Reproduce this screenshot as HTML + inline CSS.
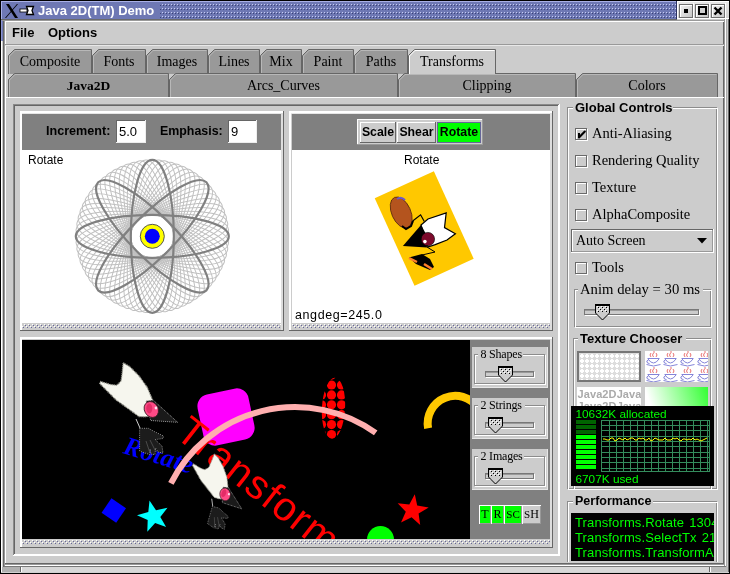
<!DOCTYPE html>
<html><head><meta charset="utf-8"><title>Java 2D(TM) Demo</title>
<style>html,body{margin:0;padding:0;width:730px;height:574px;overflow:hidden;background:#ccc}
svg{display:block;will-change:transform}</style></head>
<body><svg width="730" height="574" viewBox="0 0 730 574"><rect x="0" y="0" width="730" height="574" fill="#cccccc" />
<rect x="0" y="0" width="1" height="574" fill="#000" />
<rect x="729" y="0" width="1" height="574" fill="#000" />
<rect x="0" y="0" width="730" height="1" fill="#000" />
<rect x="0" y="573" width="730" height="1" fill="#000" />
<rect x="1" y="41" width="1" height="532" fill="#ffffff" />
<rect x="1" y="19" width="2" height="22" fill="#8c94d0" />
<rect x="2" y="19" width="1" height="22" fill="#6e78b4" />
<rect x="3" y="19" width="1" height="549" fill="#666666" />
<rect x="4" y="19" width="1" height="549" fill="#999999" />
<rect x="5" y="21" width="1" height="545" fill="#ffffff" />
<rect x="723" y="21" width="1" height="545" fill="#666666" />
<rect x="724" y="19" width="1" height="549" fill="#999999" />
<rect x="725" y="19" width="1" height="549" fill="#ffffff" />
<rect x="726" y="19" width="1" height="549" fill="#aaaaaa" />
<rect x="728" y="19" width="1" height="554" fill="#666666" />
<rect x="1" y="1" width="676" height="18" fill="#6e78b4" />
<rect x="1" y="1" width="676" height="1" fill="#a9b0e6" />
<rect x="1" y="1" width="1" height="18" fill="#a9b0e6" />
<rect x="676" y="1" width="1" height="18" fill="#4a5290" />
<defs><pattern id="tb" x="0" y="0" width="3" height="4" patternUnits="userSpaceOnUse"><rect x="0" y="0" width="1" height="1" fill="#c8ccf2"/><rect x="1" y="1" width="1" height="1" fill="#3c4478"/></pattern><pattern id="mb" x="0" y="0" width="4" height="4" patternUnits="userSpaceOnUse"><rect x="0" y="0" width="1" height="1" fill="#fff"/><rect x="2" y="2" width="1" height="1" fill="#fff"/><rect x="1" y="1" width="1" height="1" fill="#666699"/><rect x="3" y="3" width="1" height="1" fill="#666699"/></pattern><pattern id="thumb" x="0" y="0" width="4" height="4" patternUnits="userSpaceOnUse"><rect width="4" height="4" fill="#ccccff"/><rect x="0" y="0" width="1" height="1" fill="#fff"/><rect x="2" y="2" width="1" height="1" fill="#fff"/><rect x="1" y="1" width="1" height="1" fill="#666699"/><rect x="3" y="3" width="1" height="1" fill="#666699"/></pattern></defs>
<rect x="160" y="4" width="516" height="14" fill="url(#tb)" />
<rect x="1" y="19" width="676" height="1" fill="#6a6a6a" />
<defs><linearGradient id="bg1" x1="0" y1="0" x2="1" y2="1"><stop offset="0" stop-color="#f2f2f2"/><stop offset="1" stop-color="#c4c4c4"/></linearGradient><linearGradient id="bg2" x1="0" y1="0" x2="0" y2="1"><stop offset="0" stop-color="#e8e8e8"/><stop offset="1" stop-color="#cfcfcf"/></linearGradient></defs>
<rect x="677" y="1" width="52" height="18" fill="url(#bg2)" />
<rect x="677" y="1" width="52" height="1" fill="#ffffff" />
<rect x="677" y="1" width="1" height="18" fill="#ffffff" />
<rect x="677" y="18" width="52" height="1" fill="#ffffff" />
<rect x="676" y="1" width="1" height="18" fill="#2a3060" />
<rect x="679.5" y="4.5" width="13" height="13" fill="url(#bg1)" stroke="#707070"/>
<rect x="680" y="5" width="12" height="1" fill="#ffffff" />
<rect x="680" y="5" width="1" height="12" fill="#ffffff" />
<rect x="693" y="3" width="1" height="15" fill="#ffffff" />
<rect x="695.5" y="4.5" width="13" height="13" fill="url(#bg1)" stroke="#707070"/>
<rect x="696" y="5" width="12" height="1" fill="#ffffff" />
<rect x="696" y="5" width="1" height="12" fill="#ffffff" />
<rect x="709" y="3" width="1" height="15" fill="#ffffff" />
<rect x="711.5" y="4.5" width="13" height="13" fill="url(#bg1)" stroke="#707070"/>
<rect x="712" y="5" width="12" height="1" fill="#ffffff" />
<rect x="712" y="5" width="1" height="12" fill="#ffffff" />
<rect x="725" y="3" width="1" height="15" fill="#ffffff" />
<rect x="684" y="9" width="4" height="4" fill="#000" />
<rect x="699" y="7" width="7" height="7" fill="#cfcfcf" stroke="#000" stroke-width="2"/>
<path d="M714.5 7.5 L721.5 14.5 M721.5 7.5 L714.5 14.5" stroke="#000" stroke-width="2.4"/>
<path d="M6 4 L9 4 L18 18 L15 18 Z" fill="#000"/><path d="M17 4 L18 4 L6 18 L5 18 Z" fill="#000"/>
<rect x="20" y="9" width="7" height="3" fill="#fff" stroke="#000" stroke-width="0.8"/>
<path d="M26.5 6.5 L33.5 6.5 L32 10.5 L33.5 14.5 L26.5 14.5 L28 10.5 Z" fill="#fff" stroke="#000" stroke-width="1.3"/>
<text x="38" y="15" font-family="Liberation Sans" font-size="13" font-weight="bold" fill="#fff" text-anchor="start" >Java 2D(TM) Demo</text>
<rect x="2" y="20" width="722" height="1" fill="#9a9a9a" />
<rect x="5" y="21" width="719" height="1" fill="#ffffff" />
<text x="12" y="37" font-family="Liberation Sans" font-size="13" font-weight="bold" fill="#000" text-anchor="start" >File</text>
<text x="48" y="37" font-family="Liberation Sans" font-size="13" font-weight="bold" fill="#000" text-anchor="start" >Options</text>
<rect x="5" y="44" width="719" height="1" fill="#999999" />
<rect x="5" y="45" width="719" height="1" fill="#e8e8e8" />
<path d="M8.5 74 L8.5 55.5 L14.5 49.5 L91.5 49.5 L91.5 74" fill="#999999" stroke="#666666" stroke-width="1"/>
<path d="M9.5 74 L9.5 56 L15 50.5 L90.5 50.5" fill="none" stroke="#b8b8b8" stroke-width="1"/>
<text x="50.0" y="65.5" font-family="Liberation Serif" font-size="14" font-weight="normal" fill="#000" text-anchor="middle" >Composite</text>
<path d="M92.5 74 L92.5 55.5 L98.5 49.5 L145.5 49.5 L145.5 74" fill="#999999" stroke="#666666" stroke-width="1"/>
<path d="M93.5 74 L93.5 56 L99 50.5 L144.5 50.5" fill="none" stroke="#b8b8b8" stroke-width="1"/>
<text x="119.0" y="65.5" font-family="Liberation Serif" font-size="14" font-weight="normal" fill="#000" text-anchor="middle" >Fonts</text>
<path d="M146.5 74 L146.5 55.5 L152.5 49.5 L207.5 49.5 L207.5 74" fill="#999999" stroke="#666666" stroke-width="1"/>
<path d="M147.5 74 L147.5 56 L153 50.5 L206.5 50.5" fill="none" stroke="#b8b8b8" stroke-width="1"/>
<text x="177.0" y="65.5" font-family="Liberation Serif" font-size="14" font-weight="normal" fill="#000" text-anchor="middle" >Images</text>
<path d="M208.5 74 L208.5 55.5 L214.5 49.5 L259.5 49.5 L259.5 74" fill="#999999" stroke="#666666" stroke-width="1"/>
<path d="M209.5 74 L209.5 56 L215 50.5 L258.5 50.5" fill="none" stroke="#b8b8b8" stroke-width="1"/>
<text x="234.0" y="65.5" font-family="Liberation Serif" font-size="14" font-weight="normal" fill="#000" text-anchor="middle" >Lines</text>
<path d="M260.5 74 L260.5 55.5 L266.5 49.5 L301.5 49.5 L301.5 74" fill="#999999" stroke="#666666" stroke-width="1"/>
<path d="M261.5 74 L261.5 56 L267 50.5 L300.5 50.5" fill="none" stroke="#b8b8b8" stroke-width="1"/>
<text x="281.0" y="65.5" font-family="Liberation Serif" font-size="14" font-weight="normal" fill="#000" text-anchor="middle" >Mix</text>
<path d="M302.5 74 L302.5 55.5 L308.5 49.5 L353.5 49.5 L353.5 74" fill="#999999" stroke="#666666" stroke-width="1"/>
<path d="M303.5 74 L303.5 56 L309 50.5 L352.5 50.5" fill="none" stroke="#b8b8b8" stroke-width="1"/>
<text x="328.0" y="65.5" font-family="Liberation Serif" font-size="14" font-weight="normal" fill="#000" text-anchor="middle" >Paint</text>
<path d="M354.5 74 L354.5 55.5 L360.5 49.5 L407.5 49.5 L407.5 74" fill="#999999" stroke="#666666" stroke-width="1"/>
<path d="M355.5 74 L355.5 56 L361 50.5 L406.5 50.5" fill="none" stroke="#b8b8b8" stroke-width="1"/>
<text x="381.0" y="65.5" font-family="Liberation Serif" font-size="14" font-weight="normal" fill="#000" text-anchor="middle" >Paths</text>
<path d="M8.5 97 L8.5 79.5 L14.5 73.5 L168.5 73.5 L168.5 97" fill="#999999" stroke="#666666" stroke-width="1"/>
<path d="M9.5 97 L9.5 80 L15 74.5 L167.5 74.5" fill="none" stroke="#b8b8b8" stroke-width="1"/>
<text x="88.5" y="89.5" font-family="Liberation Serif" font-size="13.5" font-weight="bold" fill="#000" text-anchor="middle" >Java2D</text>
<path d="M169.5 97 L169.5 79.5 L175.5 73.5 L397.5 73.5 L397.5 97" fill="#999999" stroke="#666666" stroke-width="1"/>
<path d="M170.5 97 L170.5 80 L176 74.5 L396.5 74.5" fill="none" stroke="#b8b8b8" stroke-width="1"/>
<text x="283.5" y="89.5" font-family="Liberation Serif" font-size="14" font-weight="normal" fill="#000" text-anchor="middle" >Arcs_Curves</text>
<path d="M398.5 97 L398.5 79.5 L404.5 73.5 L575.5 73.5 L575.5 97" fill="#999999" stroke="#666666" stroke-width="1"/>
<path d="M399.5 97 L399.5 80 L405 74.5 L574.5 74.5" fill="none" stroke="#b8b8b8" stroke-width="1"/>
<text x="487.0" y="89.5" font-family="Liberation Serif" font-size="14" font-weight="normal" fill="#000" text-anchor="middle" >Clipping</text>
<path d="M576.5 97 L576.5 79.5 L582.5 73.5 L717.5 73.5 L717.5 97" fill="#999999" stroke="#666666" stroke-width="1"/>
<path d="M577.5 97 L577.5 80 L583 74.5 L716.5 74.5" fill="none" stroke="#b8b8b8" stroke-width="1"/>
<text x="647.0" y="89.5" font-family="Liberation Serif" font-size="14" font-weight="normal" fill="#000" text-anchor="middle" >Colors</text>
<path d="M408.5 74 L408.5 55.5 L414.5 49.5 L495.5 49.5 L495.5 74" fill="#cccccc" stroke="#666666" stroke-width="1"/>
<path d="M409.5 74 L409.5 56 L415 50.5 L494.5 50.5" fill="none" stroke="#fff" stroke-width="1"/>
<text x="452.0" y="65.5" font-family="Liberation Serif" font-size="14" font-weight="normal" fill="#000" text-anchor="middle" >Transforms</text>
<rect x="6" y="97" width="718" height="1" fill="#ffffff" />
<rect x="13" y="104" width="546" height="1" fill="#8a8a8a" />
<rect x="14" y="105" width="544" height="1" fill="#666666" />
<rect x="13" y="104" width="1" height="452" fill="#8a8a8a" />
<rect x="14" y="105" width="1" height="450" fill="#666666" />
<rect x="13" y="555" width="547" height="1" fill="#ffffff" />
<rect x="14" y="554" width="545" height="1" fill="#ffffff" />
<rect x="559" y="104" width="1" height="452" fill="#ffffff" />
<rect x="558" y="105" width="1" height="450" fill="#ffffff" />
<rect x="20" y="111" width="264" height="2" fill="#ffffff" />
<rect x="20" y="111" width="2" height="220" fill="#ffffff" />
<rect x="283" y="111" width="1" height="220" fill="#666666" />
<rect x="20" y="330" width="264" height="1" fill="#666666" />
<rect x="281" y="113" width="2" height="217" fill="#dddddd" />
<rect x="22" y="113" width="259" height="1" fill="#e6e6e6" />
<rect x="22" y="114" width="259" height="36" fill="#808080" />
<rect x="22" y="150" width="259" height="173" fill="#ffffff" />
<rect x="22" y="323" width="259" height="7" fill="#cccccc" />
<rect x="22" y="324" width="259" height="4" fill="url(#mb)" />
<rect x="289" y="111" width="264" height="2" fill="#ffffff" />
<rect x="289" y="111" width="2" height="220" fill="#ffffff" />
<rect x="552" y="111" width="1" height="220" fill="#666666" />
<rect x="289" y="330" width="264" height="1" fill="#666666" />
<rect x="550" y="113" width="2" height="217" fill="#dddddd" />
<rect x="291" y="113" width="259" height="1" fill="#e6e6e6" />
<rect x="292" y="114" width="258" height="36" fill="#808080" />
<rect x="292" y="150" width="258" height="173" fill="#ffffff" />
<rect x="292" y="323" width="258" height="7" fill="#cccccc" />
<rect x="292" y="324" width="258" height="4" fill="url(#mb)" />
<rect x="20" y="337" width="533" height="2" fill="#ffffff" />
<rect x="20" y="337" width="2" height="211" fill="#ffffff" />
<rect x="552" y="337" width="1" height="211" fill="#666666" />
<rect x="20" y="547" width="533" height="1" fill="#666666" />
<rect x="550" y="339" width="2" height="208" fill="#dddddd" />
<rect x="22" y="340" width="448" height="199" fill="#000" />
<rect x="470" y="340" width="80" height="199" fill="#808080" />
<rect x="22" y="539" width="528" height="8" fill="#cccccc" />
<rect x="22" y="540" width="528" height="4" fill="url(#mb)" />
<text x="46" y="135" font-family="Liberation Sans" font-size="12.6" font-weight="bold" fill="#000" text-anchor="start" >Increment:</text>
<rect x="116" y="120" width="30" height="23" fill="#ffffff" />
<rect x="116" y="120" width="30" height="1" fill="#666666" />
<rect x="116" y="120" width="1" height="23" fill="#666666" />
<rect x="116" y="142" width="30" height="1" fill="#eeeeee" />
<rect x="145" y="120" width="1" height="23" fill="#eeeeee" />
<text x="119" y="136" font-family="Liberation Sans" font-size="13" font-weight="normal" fill="#000" text-anchor="start" >5.0</text>
<text x="160" y="135" font-family="Liberation Sans" font-size="12.4" font-weight="bold" fill="#000" text-anchor="start" >Emphasis:</text>
<rect x="228" y="120" width="29" height="23" fill="#ffffff" />
<rect x="228" y="120" width="29" height="1" fill="#666666" />
<rect x="228" y="120" width="1" height="23" fill="#666666" />
<rect x="228" y="142" width="29" height="1" fill="#eeeeee" />
<rect x="256" y="120" width="1" height="23" fill="#eeeeee" />
<text x="231" y="136" font-family="Liberation Sans" font-size="13" font-weight="normal" fill="#000" text-anchor="start" >9</text>
<text x="28" y="164" font-family="Liberation Sans" font-size="12" font-weight="normal" fill="#000" text-anchor="start" >Rotate</text>
<g transform="translate(152.3 236.3)" fill="none">
<ellipse rx="21.5" ry="76.5" transform="rotate(5)" stroke="#c0c0c0" stroke-width="1"/>
<ellipse rx="21.5" ry="76.5" transform="rotate(10)" stroke="#c0c0c0" stroke-width="1"/>
<ellipse rx="21.5" ry="76.5" transform="rotate(15)" stroke="#c0c0c0" stroke-width="1"/>
<ellipse rx="21.5" ry="76.5" transform="rotate(20)" stroke="#c0c0c0" stroke-width="1"/>
<ellipse rx="21.5" ry="76.5" transform="rotate(25)" stroke="#c0c0c0" stroke-width="1"/>
<ellipse rx="21.5" ry="76.5" transform="rotate(30)" stroke="#c0c0c0" stroke-width="1"/>
<ellipse rx="21.5" ry="76.5" transform="rotate(35)" stroke="#c0c0c0" stroke-width="1"/>
<ellipse rx="21.5" ry="76.5" transform="rotate(40)" stroke="#c0c0c0" stroke-width="1"/>
<ellipse rx="21.5" ry="76.5" transform="rotate(50)" stroke="#c0c0c0" stroke-width="1"/>
<ellipse rx="21.5" ry="76.5" transform="rotate(55)" stroke="#c0c0c0" stroke-width="1"/>
<ellipse rx="21.5" ry="76.5" transform="rotate(60)" stroke="#c0c0c0" stroke-width="1"/>
<ellipse rx="21.5" ry="76.5" transform="rotate(65)" stroke="#c0c0c0" stroke-width="1"/>
<ellipse rx="21.5" ry="76.5" transform="rotate(70)" stroke="#c0c0c0" stroke-width="1"/>
<ellipse rx="21.5" ry="76.5" transform="rotate(75)" stroke="#c0c0c0" stroke-width="1"/>
<ellipse rx="21.5" ry="76.5" transform="rotate(80)" stroke="#c0c0c0" stroke-width="1"/>
<ellipse rx="21.5" ry="76.5" transform="rotate(85)" stroke="#c0c0c0" stroke-width="1"/>
<ellipse rx="21.5" ry="76.5" transform="rotate(95)" stroke="#c0c0c0" stroke-width="1"/>
<ellipse rx="21.5" ry="76.5" transform="rotate(100)" stroke="#c0c0c0" stroke-width="1"/>
<ellipse rx="21.5" ry="76.5" transform="rotate(105)" stroke="#c0c0c0" stroke-width="1"/>
<ellipse rx="21.5" ry="76.5" transform="rotate(110)" stroke="#c0c0c0" stroke-width="1"/>
<ellipse rx="21.5" ry="76.5" transform="rotate(115)" stroke="#c0c0c0" stroke-width="1"/>
<ellipse rx="21.5" ry="76.5" transform="rotate(120)" stroke="#c0c0c0" stroke-width="1"/>
<ellipse rx="21.5" ry="76.5" transform="rotate(125)" stroke="#c0c0c0" stroke-width="1"/>
<ellipse rx="21.5" ry="76.5" transform="rotate(130)" stroke="#c0c0c0" stroke-width="1"/>
<ellipse rx="21.5" ry="76.5" transform="rotate(140)" stroke="#c0c0c0" stroke-width="1"/>
<ellipse rx="21.5" ry="76.5" transform="rotate(145)" stroke="#c0c0c0" stroke-width="1"/>
<ellipse rx="21.5" ry="76.5" transform="rotate(150)" stroke="#c0c0c0" stroke-width="1"/>
<ellipse rx="21.5" ry="76.5" transform="rotate(155)" stroke="#c0c0c0" stroke-width="1"/>
<ellipse rx="21.5" ry="76.5" transform="rotate(160)" stroke="#c0c0c0" stroke-width="1"/>
<ellipse rx="21.5" ry="76.5" transform="rotate(165)" stroke="#c0c0c0" stroke-width="1"/>
<ellipse rx="21.5" ry="76.5" transform="rotate(170)" stroke="#c0c0c0" stroke-width="1"/>
<ellipse rx="21.5" ry="76.5" transform="rotate(175)" stroke="#c0c0c0" stroke-width="1"/>
<ellipse rx="21.5" ry="76.5" transform="rotate(0)" stroke="#808080" stroke-width="2.2"/>
<ellipse rx="21.5" ry="76.5" transform="rotate(45)" stroke="#808080" stroke-width="2.2"/>
<ellipse rx="21.5" ry="76.5" transform="rotate(90)" stroke="#808080" stroke-width="2.2"/>
<ellipse rx="21.5" ry="76.5" transform="rotate(135)" stroke="#808080" stroke-width="2.2"/>
<circle r="20" fill="#fff"/>
<circle r="12" fill="#ffff00" stroke="#555" stroke-width="1"/>
<circle r="7.5" fill="#0000ff"/>
</g>
<rect x="357" y="119" width="126" height="26" fill="#cccccc" />
<rect x="357" y="119" width="126" height="1" fill="#ffffff" />
<rect x="357" y="119" width="1" height="26" fill="#ffffff" />
<rect x="357" y="144" width="126" height="1" fill="#999" />
<rect x="482" y="119" width="1" height="26" fill="#999" />
<rect x="360" y="122" width="36" height="21" fill="#cccccc" />
<rect x="360" y="122" width="36" height="1" fill="#ffffff" />
<rect x="360" y="122" width="1" height="21" fill="#ffffff" />
<rect x="360" y="142" width="36" height="1" fill="#666666" />
<rect x="395" y="122" width="1" height="21" fill="#666666" />
<text x="378.0" y="136" font-family="Liberation Sans" font-size="12.3" font-weight="bold" fill="#000" text-anchor="middle" >Scale</text>
<rect x="397" y="122" width="39" height="21" fill="#cccccc" />
<rect x="397" y="122" width="39" height="1" fill="#ffffff" />
<rect x="397" y="122" width="1" height="21" fill="#ffffff" />
<rect x="397" y="142" width="39" height="1" fill="#666666" />
<rect x="435" y="122" width="1" height="21" fill="#666666" />
<text x="416.5" y="136" font-family="Liberation Sans" font-size="12.3" font-weight="bold" fill="#000" text-anchor="middle" >Shear</text>
<rect x="437" y="122" width="44" height="21" fill="#00ff00" />
<rect x="437.5" y="122.5" width="43" height="20" fill="none" stroke="#666699"/>
<text x="459.0" y="136" font-family="Liberation Sans" font-size="12.3" font-weight="bold" fill="#000" text-anchor="middle" >Rotate</text>
<text x="404" y="164" font-family="Liberation Sans" font-size="12" font-weight="normal" fill="#000" text-anchor="start" >Rotate</text>
<text x="295" y="319" font-family="Liberation Sans" font-size="12.5" font-weight="normal" fill="#000" text-anchor="start" letter-spacing="0.6">angdeg=245.0</text>
<g transform="translate(424.2 228.5) rotate(65.5)">
<rect x="-48" y="-32.5" width="96" height="65" fill="#ffc800"/>
</g>
<ellipse cx="401.2" cy="212.5" rx="9.5" ry="16.5" transform="rotate(-24 401.2 212.5)" fill="#b4541e" stroke="#5a2a10" stroke-width="0.8"/>
<path d="M397 199 q4 -3 8 1" stroke="#6a5acd" stroke-width="2" fill="none"/>
<path d="M402 226 l4 3 l5 -3 l2 -5" stroke="#000" stroke-width="2" fill="none"/>
<path d="M412.7 221 L420.6 214.8 L424.3 221.5" stroke="#000" stroke-width="1.2" fill="none"/>
<path d="M421 225 L428 219 L446.2 212.9 L444.5 227.6 L455.4 233.7 L447 240 L435.2 244.6 L428 247 Z" fill="#fff" stroke="#000" stroke-width="1.2"/>
<path d="M402.9 245.9 L421 225 L426 234 L427 247.5 Z" fill="#000"/>
<circle cx="427.9" cy="239.1" r="6.7" fill="#7c0a2c" stroke="#000" stroke-width="0.6"/>
<circle cx="424.9" cy="241.6" r="1.8" fill="#fff"/>
<path d="M427 247 L435 252 L422 255" stroke="#000" stroke-width="1" fill="none"/>
<path d="M409 257.5 L422 254 L430 259 L434 267 L430 270 L416 264 Z" fill="#000"/>
<path d="M409 258 L417 262 M424 264 L432 269" stroke="#ff7f2a" stroke-width="2.5" fill="none"/>
<svg x="22" y="340" width="448" height="199" overflow="hidden"><g transform="translate(-22 -340)">
<text x="0" y="0" font-family="Liberation Serif" font-weight="bold" font-style="italic" font-size="26" letter-spacing="0.4" fill="#0000ff" transform="translate(122 453) rotate(17)">Rotate</text>
<rect x="-26" y="-26" width="52" height="52" rx="12" fill="#ff00ff" transform="translate(226 417) rotate(-12)"/>
<text x="0" y="0" font-family="Liberation Sans" font-size="40.5" letter-spacing="1.3" fill="#ff0000" transform="translate(173.8 436.2) rotate(38.1)">Transform</text>
<defs><clipPath id="ell"><ellipse cx="333.5" cy="408.3" rx="11.6" ry="30.6" transform="rotate(3 333.5 408.3)"/></clipPath></defs>
<g clip-path="url(#ell)">
<circle cx="311.5" cy="365.2" r="4.6" fill="#ff0000"/>
<circle cx="321.5" cy="365.2" r="4.6" fill="#ff0000"/>
<circle cx="331.5" cy="365.2" r="4.6" fill="#ff0000"/>
<circle cx="341.5" cy="365.2" r="4.6" fill="#ff0000"/>
<circle cx="351.5" cy="365.2" r="4.6" fill="#ff0000"/>
<circle cx="311.5" cy="375.1" r="4.6" fill="#ff0000"/>
<circle cx="321.5" cy="375.1" r="4.6" fill="#ff0000"/>
<circle cx="331.5" cy="375.1" r="4.6" fill="#ff0000"/>
<circle cx="341.5" cy="375.1" r="4.6" fill="#ff0000"/>
<circle cx="351.5" cy="375.1" r="4.6" fill="#ff0000"/>
<circle cx="311.5" cy="385.0" r="4.6" fill="#ff0000"/>
<circle cx="321.5" cy="385.0" r="4.6" fill="#ff0000"/>
<circle cx="331.5" cy="385.0" r="4.6" fill="#ff0000"/>
<circle cx="341.5" cy="385.0" r="4.6" fill="#ff0000"/>
<circle cx="351.5" cy="385.0" r="4.6" fill="#ff0000"/>
<circle cx="311.5" cy="394.90000000000003" r="4.6" fill="#ff0000"/>
<circle cx="321.5" cy="394.90000000000003" r="4.6" fill="#ff0000"/>
<circle cx="331.5" cy="394.90000000000003" r="4.6" fill="#ff0000"/>
<circle cx="341.5" cy="394.90000000000003" r="4.6" fill="#ff0000"/>
<circle cx="351.5" cy="394.90000000000003" r="4.6" fill="#ff0000"/>
<circle cx="311.5" cy="404.8" r="4.6" fill="#ff0000"/>
<circle cx="321.5" cy="404.8" r="4.6" fill="#ff0000"/>
<circle cx="331.5" cy="404.8" r="4.6" fill="#ff0000"/>
<circle cx="341.5" cy="404.8" r="4.6" fill="#ff0000"/>
<circle cx="351.5" cy="404.8" r="4.6" fill="#ff0000"/>
<circle cx="311.5" cy="414.7" r="4.6" fill="#ff0000"/>
<circle cx="321.5" cy="414.7" r="4.6" fill="#ff0000"/>
<circle cx="331.5" cy="414.7" r="4.6" fill="#ff0000"/>
<circle cx="341.5" cy="414.7" r="4.6" fill="#ff0000"/>
<circle cx="351.5" cy="414.7" r="4.6" fill="#ff0000"/>
<circle cx="311.5" cy="424.6" r="4.6" fill="#ff0000"/>
<circle cx="321.5" cy="424.6" r="4.6" fill="#ff0000"/>
<circle cx="331.5" cy="424.6" r="4.6" fill="#ff0000"/>
<circle cx="341.5" cy="424.6" r="4.6" fill="#ff0000"/>
<circle cx="351.5" cy="424.6" r="4.6" fill="#ff0000"/>
<circle cx="311.5" cy="434.5" r="4.6" fill="#ff0000"/>
<circle cx="321.5" cy="434.5" r="4.6" fill="#ff0000"/>
<circle cx="331.5" cy="434.5" r="4.6" fill="#ff0000"/>
<circle cx="341.5" cy="434.5" r="4.6" fill="#ff0000"/>
<circle cx="351.5" cy="434.5" r="4.6" fill="#ff0000"/>
<circle cx="311.5" cy="444.40000000000003" r="4.6" fill="#ff0000"/>
<circle cx="321.5" cy="444.40000000000003" r="4.6" fill="#ff0000"/>
<circle cx="331.5" cy="444.40000000000003" r="4.6" fill="#ff0000"/>
<circle cx="341.5" cy="444.40000000000003" r="4.6" fill="#ff0000"/>
<circle cx="351.5" cy="444.40000000000003" r="4.6" fill="#ff0000"/>
</g>
<path d="M170.9 483.4 A139 139 0 0 1 375.7 432.9" stroke="#ffafaf" stroke-width="6" fill="none"/>
<path d="M428.1 428.3 A27.6 27.6 0 0 1 477.8 407.5" stroke="#ffc800" stroke-width="8" fill="none"/>
<rect x="-8.8" y="-8.8" width="17.6" height="17.6" fill="#0000ff" transform="translate(113.8 510.5) rotate(34)"/>
<polygon points="149.5,500.5 156.0,510.2 167.5,507.8 160.3,517.0 166.1,527.1 155.1,523.1 147.3,531.8 147.7,520.1 137.0,515.3 148.3,512.1" fill="#00ffff"/>
<polygon points="414.8,494.2 417.2,505.6 428.7,507.6 418.6,513.5 420.2,525.1 411.6,517.2 401.0,522.4 405.8,511.7 397.7,503.3 409.3,504.5" fill="#ff0000"/>
<circle cx="380.5" cy="539.5" r="13.5" fill="#00ff00"/>
<g>
<path d="M136 419 L140 428" stroke="#cfcfcf" stroke-width="1" fill="none"/>
<polygon points="139.6,428.3 148.4,428.3 154,431.4 163.5,436 163,438.5 155,439.6 162,446 163,453 158,452 155.5,448 155,454.6 151,454 150,449 149.7,454.6 145,453 139.6,451" fill="#1c1c1c" stroke="#9a9a9a" stroke-width="0.9" stroke-dasharray="1 1.2"/>
<path d="M150 440 L156 452 M146 441 L150 453" stroke="#555" stroke-width="0.8"/>
<polygon points="123.2,362.7 129.5,366.4 138.9,375.8 147.2,387.3 153,401 151,416 144.6,416.8 138.9,416.5 115.9,399.8 99.7,383.6 100.7,381.5 110.7,384.6 116.9,385.2 121.1,381 122.2,372.6" fill="#f6f6ee" stroke="#9a9a90" stroke-width="1.3" stroke-dasharray="1.2 0.8"/>
<polygon points="146,401 153,400 177.6,422.3 150.7,420.5" fill="#1a1a1a" stroke="#aaaaaa" stroke-width="0.9" stroke-dasharray="1 1"/>
<ellipse cx="151.3" cy="409.5" rx="6.8" ry="8.3" transform="rotate(-30 151.3 409.5)" fill="#ff4a86" stroke="#3a1a22" stroke-width="0.8"/>
<ellipse cx="149.3" cy="408.5" rx="3" ry="5" fill="#d8205a" opacity="0.7"/>
<circle cx="156" cy="408" r="1.4" fill="#ffe0f0"/>
</g>
<g transform="matrix(0.7407 0.1849 -0.2158 0.7541 201.39 157.62)">
<path d="M136 419 L140 428" stroke="#cfcfcf" stroke-width="1" fill="none"/>
<polygon points="139.6,428.3 148.4,428.3 154,431.4 163.5,436 163,438.5 155,439.6 162,446 163,453 158,452 155.5,448 155,454.6 151,454 150,449 149.7,454.6 145,453 139.6,451" fill="#1c1c1c" stroke="#9a9a9a" stroke-width="0.9" stroke-dasharray="1 1.2"/>
<path d="M150 440 L156 452 M146 441 L150 453" stroke="#555" stroke-width="0.8"/>
<polygon points="123.2,362.7 129.5,366.4 138.9,375.8 147.2,387.3 153,401 151,416 144.6,416.8 138.9,416.5 115.9,399.8 99.7,383.6 100.7,381.5 110.7,384.6 116.9,385.2 121.1,381 122.2,372.6" fill="#f6f6ee" stroke="#9a9a90" stroke-width="1.3" stroke-dasharray="1.2 0.8"/>
<polygon points="146,401 153,400 177.6,422.3 150.7,420.5" fill="#1a1a1a" stroke="#aaaaaa" stroke-width="0.9" stroke-dasharray="1 1"/>
<ellipse cx="151.3" cy="409.5" rx="6.8" ry="8.3" transform="rotate(-30 151.3 409.5)" fill="#ff4a86" stroke="#3a1a22" stroke-width="0.8"/>
<ellipse cx="149.3" cy="408.5" rx="3" ry="5" fill="#d8205a" opacity="0.7"/>
<circle cx="156" cy="408" r="1.4" fill="#ffe0f0"/>
</g>
</g></svg>
<rect x="472" y="347" width="76" height="41" fill="#cccccc" />
<rect x="472" y="387" width="76" height="1" fill="#e6e6e6" />
<rect x="547" y="347" width="1" height="41" fill="#e6e6e6" />
<rect x="475.5" y="355.5" width="70" height="29" fill="none" stroke="#fff"/>
<rect x="474.5" y="354.5" width="70" height="29" fill="none" stroke="#8c8c8c"/>
<rect x="478" y="349" width="45" height="10" fill="#cccccc" />
<text x="480.5" y="357.8" font-family="Liberation Serif" font-size="12" font-weight="normal" fill="#000" text-anchor="start" letter-spacing="-0.2">8 Shapes</text>
<rect x="485" y="371" width="49" height="6" fill="#cccccc" />
<rect x="485.5" y="371.5" width="48" height="5" fill="none" stroke="#777"/>
<rect x="486" y="372" width="47" height="1" fill="#999" />
<rect x="486" y="377" width="49" height="1" fill="#ffffff" />
<rect x="534" y="372" width="1" height="6" fill="#ffffff" />
<path d="M498.5 367 L512.5 367 L512.5 375 L505.5 382 L498.5 375 Z" fill="#cccccc" stroke="#000" stroke-width="1"/>
<rect x="498" y="366" width="15" height="2" fill="#000" />
<rect x="501" y="369" width="1" height="1" fill="#000" />
<rect x="505" y="369" width="1" height="1" fill="#000" />
<rect x="509" y="369" width="1" height="1" fill="#000" />
<rect x="503" y="371" width="1" height="1" fill="#000" />
<rect x="507" y="371" width="1" height="1" fill="#000" />
<rect x="501" y="373" width="1" height="1" fill="#000" />
<rect x="505" y="373" width="1" height="1" fill="#000" />
<rect x="509" y="373" width="1" height="1" fill="#000" />
<rect x="500" y="368" width="1" height="1" fill="#fff" />
<rect x="504" y="368" width="1" height="1" fill="#fff" />
<rect x="508" y="368" width="1" height="1" fill="#fff" />
<rect x="502" y="370" width="1" height="1" fill="#fff" />
<rect x="506" y="370" width="1" height="1" fill="#fff" />
<rect x="500" y="372" width="1" height="1" fill="#fff" />
<rect x="504" y="372" width="1" height="1" fill="#fff" />
<rect x="508" y="372" width="1" height="1" fill="#fff" />
<rect x="510" y="370" width="1" height="1" fill="#fff" />
<rect x="472" y="398" width="76" height="41" fill="#cccccc" />
<rect x="472" y="438" width="76" height="1" fill="#e6e6e6" />
<rect x="547" y="398" width="1" height="41" fill="#e6e6e6" />
<rect x="475.5" y="406.5" width="70" height="29" fill="none" stroke="#fff"/>
<rect x="474.5" y="405.5" width="70" height="29" fill="none" stroke="#8c8c8c"/>
<rect x="478" y="400" width="47" height="10" fill="#cccccc" />
<text x="480.5" y="408.8" font-family="Liberation Serif" font-size="12" font-weight="normal" fill="#000" text-anchor="start" letter-spacing="-0.2">2 Strings</text>
<rect x="485" y="422" width="49" height="6" fill="#cccccc" />
<rect x="485.5" y="422.5" width="48" height="5" fill="none" stroke="#777"/>
<rect x="486" y="423" width="47" height="1" fill="#999" />
<rect x="486" y="428" width="49" height="1" fill="#ffffff" />
<rect x="534" y="423" width="1" height="6" fill="#ffffff" />
<path d="M488.5 418 L502.5 418 L502.5 426 L495.5 433 L488.5 426 Z" fill="#cccccc" stroke="#000" stroke-width="1"/>
<rect x="488" y="417" width="15" height="2" fill="#000" />
<rect x="491" y="420" width="1" height="1" fill="#000" />
<rect x="495" y="420" width="1" height="1" fill="#000" />
<rect x="499" y="420" width="1" height="1" fill="#000" />
<rect x="493" y="422" width="1" height="1" fill="#000" />
<rect x="497" y="422" width="1" height="1" fill="#000" />
<rect x="491" y="424" width="1" height="1" fill="#000" />
<rect x="495" y="424" width="1" height="1" fill="#000" />
<rect x="499" y="424" width="1" height="1" fill="#000" />
<rect x="490" y="419" width="1" height="1" fill="#fff" />
<rect x="494" y="419" width="1" height="1" fill="#fff" />
<rect x="498" y="419" width="1" height="1" fill="#fff" />
<rect x="492" y="421" width="1" height="1" fill="#fff" />
<rect x="496" y="421" width="1" height="1" fill="#fff" />
<rect x="490" y="423" width="1" height="1" fill="#fff" />
<rect x="494" y="423" width="1" height="1" fill="#fff" />
<rect x="498" y="423" width="1" height="1" fill="#fff" />
<rect x="500" y="421" width="1" height="1" fill="#fff" />
<rect x="472" y="449" width="76" height="41" fill="#cccccc" />
<rect x="472" y="489" width="76" height="1" fill="#e6e6e6" />
<rect x="547" y="449" width="1" height="41" fill="#e6e6e6" />
<rect x="475.5" y="457.5" width="70" height="29" fill="none" stroke="#fff"/>
<rect x="474.5" y="456.5" width="70" height="29" fill="none" stroke="#8c8c8c"/>
<rect x="478" y="451" width="46" height="10" fill="#cccccc" />
<text x="480.5" y="459.8" font-family="Liberation Serif" font-size="12" font-weight="normal" fill="#000" text-anchor="start" letter-spacing="-0.2">2 Images</text>
<rect x="485" y="473" width="49" height="6" fill="#cccccc" />
<rect x="485.5" y="473.5" width="48" height="5" fill="none" stroke="#777"/>
<rect x="486" y="474" width="47" height="1" fill="#999" />
<rect x="486" y="479" width="49" height="1" fill="#ffffff" />
<rect x="534" y="474" width="1" height="6" fill="#ffffff" />
<path d="M488.5 469 L502.5 469 L502.5 477 L495.5 484 L488.5 477 Z" fill="#cccccc" stroke="#000" stroke-width="1"/>
<rect x="488" y="468" width="15" height="2" fill="#000" />
<rect x="491" y="471" width="1" height="1" fill="#000" />
<rect x="495" y="471" width="1" height="1" fill="#000" />
<rect x="499" y="471" width="1" height="1" fill="#000" />
<rect x="493" y="473" width="1" height="1" fill="#000" />
<rect x="497" y="473" width="1" height="1" fill="#000" />
<rect x="491" y="475" width="1" height="1" fill="#000" />
<rect x="495" y="475" width="1" height="1" fill="#000" />
<rect x="499" y="475" width="1" height="1" fill="#000" />
<rect x="490" y="470" width="1" height="1" fill="#fff" />
<rect x="494" y="470" width="1" height="1" fill="#fff" />
<rect x="498" y="470" width="1" height="1" fill="#fff" />
<rect x="492" y="472" width="1" height="1" fill="#fff" />
<rect x="496" y="472" width="1" height="1" fill="#fff" />
<rect x="490" y="474" width="1" height="1" fill="#fff" />
<rect x="494" y="474" width="1" height="1" fill="#fff" />
<rect x="498" y="474" width="1" height="1" fill="#fff" />
<rect x="500" y="472" width="1" height="1" fill="#fff" />
<rect x="479" y="505" width="12" height="19" fill="#ffffff" />
<rect x="480" y="506" width="10" height="17" fill="#00ff00" />
<rect x="480" y="523" width="11" height="1" fill="#999" />
<rect x="490" y="506" width="1" height="18" fill="#999" />
<text x="485.0" y="517.5" font-family="Liberation Serif" font-size="12" font-weight="normal" fill="#000" text-anchor="middle" >T</text>
<rect x="491" y="505" width="13" height="19" fill="#ffffff" />
<rect x="492" y="506" width="11" height="17" fill="#00ff00" />
<rect x="492" y="523" width="12" height="1" fill="#999" />
<rect x="503" y="506" width="1" height="18" fill="#999" />
<text x="497.5" y="517.5" font-family="Liberation Serif" font-size="12" font-weight="normal" fill="#000" text-anchor="middle" >R</text>
<rect x="504" y="505" width="18" height="19" fill="#ffffff" />
<rect x="505" y="506" width="16" height="17" fill="#00ff00" />
<rect x="505" y="523" width="17" height="1" fill="#999" />
<rect x="521" y="506" width="1" height="18" fill="#999" />
<text x="513.0" y="517.5" font-family="Liberation Serif" font-size="12" font-weight="normal" fill="#000" text-anchor="middle" ><tspan font-size="11">SC</tspan></text>
<rect x="522" y="505" width="19" height="19" fill="#ffffff" />
<rect x="523" y="506" width="17" height="17" fill="#cccccc" />
<rect x="523" y="523" width="18" height="1" fill="#999" />
<rect x="540" y="506" width="1" height="18" fill="#999" />
<text x="531.5" y="517.5" font-family="Liberation Serif" font-size="12" font-weight="normal" fill="#000" text-anchor="middle" ><tspan font-size="11">S</tspan>H</text>
<rect x="567.5" y="107.5" width="149" height="381" fill="none" stroke="#8c8c8c"/>
<rect x="568.5" y="108.5" width="149" height="381" fill="none" stroke="#fff"/>
<rect x="573" y="100" width="100" height="12" fill="#cccccc" />
<text x="575" y="111.5" font-family="Liberation Sans" font-size="13" font-weight="bold" fill="#000" text-anchor="start" >Global Controls</text>
<rect x="576.5" y="129.5" width="11" height="11" fill="none" stroke="#fff"/>
<rect x="575.5" y="128.5" width="11" height="11" fill="none" stroke="#6a6a6a"/>
<rect x="578" y="133" width="2" height="5" fill="#000" />
<path d="M579 137.5 L584.8 131.6" stroke="#000" stroke-width="2.1" stroke-linecap="round" fill="none"/>
<text x="592" y="138" font-family="Liberation Serif" font-size="14.5" font-weight="normal" fill="#000" text-anchor="start" >Anti-Aliasing</text>
<rect x="576.5" y="156.5" width="11" height="11" fill="none" stroke="#fff"/>
<rect x="575.5" y="155.5" width="11" height="11" fill="none" stroke="#6a6a6a"/>
<text x="592" y="165" font-family="Liberation Serif" font-size="14.5" font-weight="normal" fill="#000" text-anchor="start" >Rendering Quality</text>
<rect x="576.5" y="183.5" width="11" height="11" fill="none" stroke="#fff"/>
<rect x="575.5" y="182.5" width="11" height="11" fill="none" stroke="#6a6a6a"/>
<text x="592" y="192" font-family="Liberation Serif" font-size="14.5" font-weight="normal" fill="#000" text-anchor="start" >Texture</text>
<rect x="576.5" y="210.5" width="11" height="11" fill="none" stroke="#fff"/>
<rect x="575.5" y="209.5" width="11" height="11" fill="none" stroke="#6a6a6a"/>
<text x="592" y="219" font-family="Liberation Serif" font-size="14.5" font-weight="normal" fill="#000" text-anchor="start" >AlphaComposite</text>
<rect x="571" y="229" width="143" height="24" fill="#cccccc" />
<rect x="571" y="229" width="143" height="1" fill="#666666" />
<rect x="571" y="229" width="1" height="24" fill="#666666" />
<rect x="571" y="252" width="143" height="1" fill="#ffffff" />
<rect x="713" y="229" width="1" height="24" fill="#ffffff" />
<rect x="572" y="230" width="141" height="1" fill="#ffffff" />
<rect x="572" y="230" width="1" height="22" fill="#ffffff" />
<rect x="572" y="251" width="141" height="1" fill="#999" />
<rect x="712" y="230" width="1" height="22" fill="#999" />
<text x="576" y="245" font-family="Liberation Serif" font-size="14" font-weight="normal" fill="#000" text-anchor="start" >Auto Screen</text>
<path d="M697 238 L707 238 L702 243.5 Z" fill="#000"/>
<rect x="576.5" y="263.5" width="11" height="11" fill="none" stroke="#fff"/>
<rect x="575.5" y="262.5" width="11" height="11" fill="none" stroke="#6a6a6a"/>
<text x="592" y="272" font-family="Liberation Serif" font-size="14.5" font-weight="normal" fill="#000" text-anchor="start" >Tools</text>
<rect x="574.5" y="289.5" width="136" height="37" fill="none" stroke="#8c8c8c"/>
<rect x="575.5" y="290.5" width="136" height="37" fill="none" stroke="#fff"/>
<rect x="578" y="280" width="125" height="12" fill="#cccccc" />
<text x="580" y="293.5" font-family="Liberation Serif" font-size="14.7" font-weight="normal" fill="#000" text-anchor="start" >Anim delay = 30 ms</text>
<rect x="584" y="309" width="115" height="6" fill="#cccccc" />
<rect x="584.5" y="309.5" width="114" height="5" fill="none" stroke="#777"/>
<rect x="585" y="310" width="113" height="1" fill="#999" />
<rect x="585" y="315" width="115" height="1" fill="#ffffff" />
<rect x="699" y="310" width="1" height="6" fill="#ffffff" />
<path d="M595.5 305 L609.5 305 L609.5 313 L602.5 320 L595.5 313 Z" fill="#cccccc" stroke="#000" stroke-width="1"/>
<rect x="595" y="304" width="15" height="2" fill="#000" />
<rect x="598" y="307" width="1" height="1" fill="#000" />
<rect x="602" y="307" width="1" height="1" fill="#000" />
<rect x="606" y="307" width="1" height="1" fill="#000" />
<rect x="600" y="309" width="1" height="1" fill="#000" />
<rect x="604" y="309" width="1" height="1" fill="#000" />
<rect x="598" y="311" width="1" height="1" fill="#000" />
<rect x="602" y="311" width="1" height="1" fill="#000" />
<rect x="606" y="311" width="1" height="1" fill="#000" />
<rect x="597" y="306" width="1" height="1" fill="#fff" />
<rect x="601" y="306" width="1" height="1" fill="#fff" />
<rect x="605" y="306" width="1" height="1" fill="#fff" />
<rect x="599" y="308" width="1" height="1" fill="#fff" />
<rect x="603" y="308" width="1" height="1" fill="#fff" />
<rect x="597" y="310" width="1" height="1" fill="#fff" />
<rect x="601" y="310" width="1" height="1" fill="#fff" />
<rect x="605" y="310" width="1" height="1" fill="#fff" />
<rect x="607" y="308" width="1" height="1" fill="#fff" />
<rect x="573.5" y="338.5" width="137" height="150" fill="none" stroke="#8c8c8c"/>
<rect x="574.5" y="339.5" width="137" height="150" fill="none" stroke="#fff"/>
<rect x="578" y="330" width="108" height="14" fill="#cccccc" />
<text x="580" y="343" font-family="Liberation Sans" font-size="13" font-weight="bold" fill="#000" text-anchor="start" >Texture Chooser</text>
<rect x="577" y="351" width="64" height="31" fill="#777777" />
<rect x="579" y="353" width="60" height="27" fill="#dddddd" />
<defs><pattern id="tx1" x="580" y="354" width="5" height="5" patternUnits="userSpaceOnUse"><rect x="1" y="0" width="2" height="1" fill="#fff"/><rect x="0" y="1" width="4" height="2" fill="#fff"/><rect x="1" y="3" width="2" height="1" fill="#fff"/></pattern><pattern id="tx2" x="645" y="351" width="17" height="16" patternUnits="userSpaceOnUse"><path d="M2.5 7.5 h12 M3 8 q5.5 8 11 0 M3.5 9 q-3 0.5 -1 3 l2 0.5 M1.5 13.5 q7 3 14 0" stroke="#8484d8" stroke-width="1" fill="none"/><path d="M6 6 q-2 -2 0 -4 M8.5 6 q-2 -2 0 -4 q2 -1 0 -2 M11 6 q2 -2 0 -4" stroke="#e87070" stroke-width="1" fill="none"/></pattern><linearGradient id="tx4" x1="0" x2="1" y1="0.1" y2="0"><stop offset="0" stop-color="#fff"/><stop offset="1" stop-color="#33ff33"/></linearGradient></defs>
<rect x="579" y="353" width="60" height="27" fill="url(#tx1)" />
<rect x="645" y="351" width="63" height="31" fill="#fff" />
<rect x="645" y="351" width="63" height="31" fill="url(#tx2)" />
<rect x="577" y="387" width="64" height="19" fill="#fff" />
<svg x="577" y="387" width="64" height="19" overflow="hidden">
<text x="0.5" y="10.5" font-family="Liberation Sans" font-size="11" font-weight="bold" fill="#aaaaaa" text-anchor="start" letter-spacing="0.1">Java2DJava</text>
<text x="0.5" y="22.5" font-family="Liberation Sans" font-size="11" font-weight="bold" fill="#aaaaaa" text-anchor="start" letter-spacing="0.1">Java2DJava</text>
</svg>
<rect x="645" y="387" width="63" height="19" fill="url(#tx4)" />
<rect x="571" y="406" width="143" height="80" fill="#000" />
<text x="575.5" y="418" font-family="Liberation Sans" font-size="11.8" font-weight="normal" fill="#00ff00" text-anchor="start" >10632K allocated</text>
<text x="575.5" y="483" font-family="Liberation Sans" font-size="11.8" font-weight="normal" fill="#00ff00" text-anchor="start" >6707K used</text>
<rect x="576" y="420" width="20" height="4" fill="#006400" />
<rect x="576" y="425" width="20" height="4" fill="#006400" />
<rect x="576" y="430" width="20" height="4" fill="#006400" />
<rect x="576" y="435" width="20" height="4" fill="#00ff00" />
<rect x="576" y="440" width="20" height="4" fill="#00ff00" />
<rect x="576" y="445" width="20" height="4" fill="#00ff00" />
<rect x="576" y="450" width="20" height="4" fill="#00ff00" />
<rect x="576" y="455" width="20" height="4" fill="#00ff00" />
<rect x="576" y="460" width="20" height="4" fill="#00ff00" />
<rect x="576" y="465" width="20" height="4" fill="#00ff00" />
<g stroke="#348c5c" stroke-width="1" fill="none" shape-rendering="crispEdges">
<rect x="601.5" y="420.5" width="108" height="51"/>
<line x1="609.5" y1="420" x2="609.5" y2="472"/>
<line x1="616.5" y1="420" x2="616.5" y2="472"/>
<line x1="623.5" y1="420" x2="623.5" y2="472"/>
<line x1="630.5" y1="420" x2="630.5" y2="472"/>
<line x1="637.5" y1="420" x2="637.5" y2="472"/>
<line x1="644.5" y1="420" x2="644.5" y2="472"/>
<line x1="651.5" y1="420" x2="651.5" y2="472"/>
<line x1="658.5" y1="420" x2="658.5" y2="472"/>
<line x1="665.5" y1="420" x2="665.5" y2="472"/>
<line x1="672.5" y1="420" x2="672.5" y2="472"/>
<line x1="679.5" y1="420" x2="679.5" y2="472"/>
<line x1="686.5" y1="420" x2="686.5" y2="472"/>
<line x1="693.5" y1="420" x2="693.5" y2="472"/>
<line x1="700.5" y1="420" x2="700.5" y2="472"/>
<line x1="707.5" y1="420" x2="707.5" y2="472"/>
<line x1="601" y1="425.5" x2="710" y2="425.5"/>
<line x1="601" y1="430.5" x2="710" y2="430.5"/>
<line x1="601" y1="436.5" x2="710" y2="436.5"/>
<line x1="601" y1="441.5" x2="710" y2="441.5"/>
<line x1="601" y1="446.5" x2="710" y2="446.5"/>
<line x1="601" y1="452.5" x2="710" y2="452.5"/>
<line x1="601" y1="457.5" x2="710" y2="457.5"/>
<line x1="601" y1="462.5" x2="710" y2="462.5"/>
<line x1="601" y1="468.5" x2="710" y2="468.5"/>
</g>
<polyline points="603,439 605,439 607,440 609,440 611,438 613,438 615,441 617,440 619,438 621,439 623,440 625,438 627,440 629,439 631,438 633,438 635,440 637,440 639,438 641,439 643,438 645,440 647,440 649,438 651,441 653,440 655,438 657,439 659,440 661,440 663,440 665,438 667,440 669,440 671,440 673,438 675,439 677,438 679,440 681,441 683,439 685,439 687,440 689,439 691,440 693,438 695,440 697,439 699,440 701,441 703,440 705,439 707,438" stroke="#ffff00" stroke-width="1" fill="none"/>
<rect x="567.5" y="501.5" width="149" height="72" fill="none" stroke="#8c8c8c"/>
<rect x="568.5" y="502.5" width="149" height="72" fill="none" stroke="#fff"/>
<rect x="573" y="493" width="80" height="14" fill="#cccccc" />
<text x="575" y="505" font-family="Liberation Sans" font-size="12.5" font-weight="bold" fill="#000" text-anchor="start" >Performance</text>
<rect x="571" y="513" width="143" height="48" fill="#000" />
<svg x="571" y="513" width="143" height="48" overflow="hidden">
<text x="4" y="14.3" font-family="Liberation Sans" font-size="13" font-weight="normal" fill="#00ff00" text-anchor="start" word-spacing="1.2" letter-spacing="0.12">Transforms.Rotate 1304</text>
<text x="4" y="29.4" font-family="Liberation Sans" font-size="13" font-weight="normal" fill="#00ff00" text-anchor="start" word-spacing="1.2" letter-spacing="0.12">Transforms.SelectTx 21</text>
<text x="4" y="43.9" font-family="Liberation Sans" font-size="13" font-weight="normal" fill="#00ff00" text-anchor="start" letter-spacing="0.12">Transforms.TransformA</text>
</svg>
<rect x="2" y="562" width="726" height="11" fill="#cccccc" />
<rect x="5" y="563" width="719" height="1" fill="#666666" />
<rect x="4" y="564" width="721" height="1" fill="#999" />
<rect x="4" y="565" width="721" height="1" fill="#ffffff" />
<rect x="3" y="566" width="723" height="1" fill="#777" />
<rect x="2" y="567" width="726" height="5" fill="#d8d8d8" />
<rect x="2" y="567" width="18" height="5" fill="#b0b0b0" />
<rect x="20" y="567" width="1" height="5" fill="#666" />
<rect x="21" y="567" width="1" height="5" fill="#ffffff" />
<rect x="709" y="567" width="1" height="5" fill="#666" />
<rect x="710" y="567" width="1" height="5" fill="#ffffff" />
<rect x="711" y="567" width="17" height="5" fill="#bbbbbb" />
<rect x="1" y="562" width="1" height="11" fill="#ffffff" />
<rect x="3" y="562" width="1" height="5" fill="#666666" />
<rect x="4" y="562" width="1" height="4" fill="#999999" />
<rect x="5" y="562" width="1" height="1" fill="#ffffff" />
<rect x="723" y="562" width="1" height="1" fill="#666666" />
<rect x="724" y="562" width="1" height="4" fill="#999999" />
<rect x="725" y="562" width="1" height="4" fill="#ffffff" />
<rect x="726" y="562" width="1" height="5" fill="#aaaaaa" />
<rect x="728" y="562" width="1" height="11" fill="#666666" />
<rect x="0" y="572" width="730" height="1" fill="#d0d0d0" />
<rect x="0" y="573" width="730" height="1" fill="#000" />
<rect x="0" y="0" width="1" height="574" fill="#000" />
<rect x="729" y="0" width="1" height="574" fill="#000" /></svg></body></html>
